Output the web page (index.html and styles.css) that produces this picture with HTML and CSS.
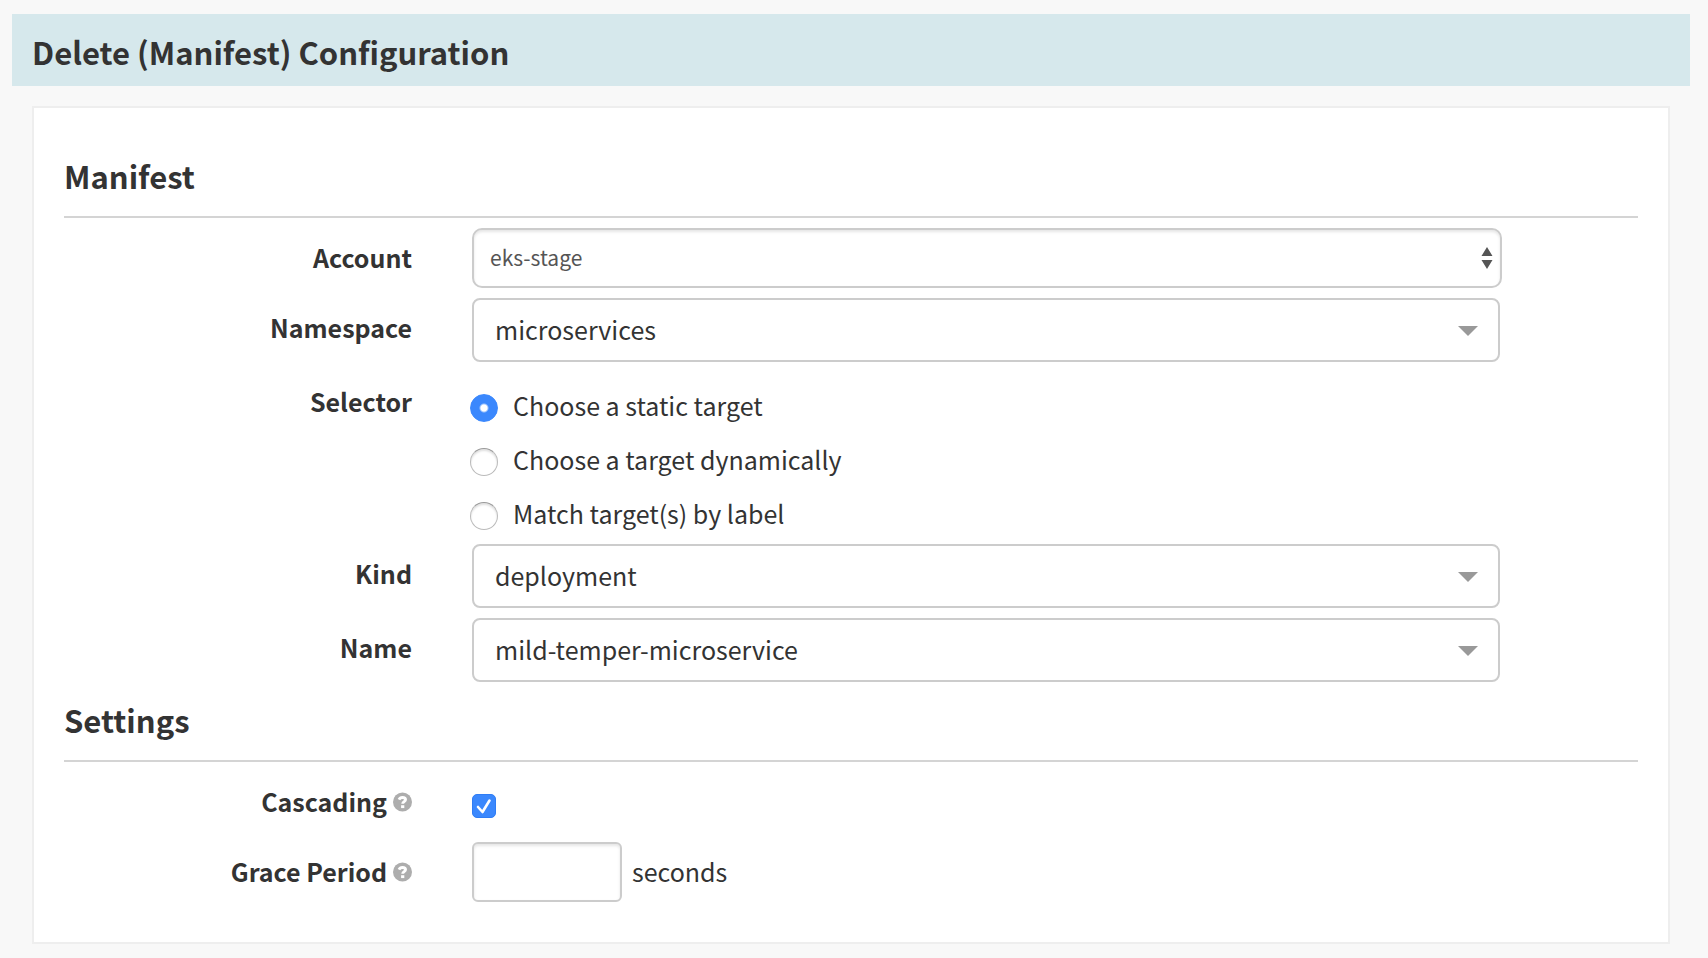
FILE: index.html
```html
<!DOCTYPE html>
<html lang="en">
<head>
<meta charset="utf-8">
<title>Delete (Manifest) Configuration</title>
<link rel="stylesheet" href="styles.css">
</head>
<body>
<svg class="sprite" aria-hidden="true">
  <symbol id="help" viewBox="0 0 20 20">
    <circle cx="10" cy="10" r="10" fill="#adadad"/>
    <path d="M6.300 7.500C7 6 8.200 5.300 9.900 5.300c2 0 3.300 .9 3.300 2.400 0 1.900-3 2.100-3 4.200" fill="none" stroke="#fff" stroke-width="3"/>
    <rect x="8.500" y="13.400" width="3.400" height="3" fill="#fff"/>
  </symbol>
  <symbol id="caret" viewBox="0 0 20 10"><path d="M0 0h20L10 10z" fill="#999"/></symbol>
  <symbol id="updown" viewBox="0 0 12 22"><path d="M6 0l5.500 9H.5zM.5 13h11L6 22z" fill="#555"/></symbol>
</svg>
<main class="page">
  <header class="banner"><h1 class="heading">Delete (Manifest) Configuration</h1></header>
  <form class="panel">
    <section class="section">
      <h2 class="heading section-title">Manifest</h2>
      <div class="row">
        <label class="label" for="account">Account</label>
        <div class="select native">
          <select id="account"><option>eks-stage</option></select>
          <svg class="updown" aria-hidden="true"><use href="#updown"/></svg>
        </div>
      </div>
      <div class="row">
        <label class="label" for="namespace">Namespace</label>
        <div class="select">
          <select id="namespace"><option>microservices</option></select>
          <svg class="caret" aria-hidden="true"><use href="#caret"/></svg>
        </div>
      </div>
      <div class="row" role="radiogroup" aria-labelledby="selector">
        <span class="label" id="selector">Selector</span>
        <div class="radios">
          <label class="radio"><input type="radio" name="selector" checked><span>Choose a static target</span></label>
          <label class="radio"><input type="radio" name="selector"><span>Choose a target dynamically</span></label>
          <label class="radio"><input type="radio" name="selector"><span>Match target(s) by label</span></label>
        </div>
      </div>
      <div class="row">
        <label class="label" for="kind">Kind</label>
        <div class="select">
          <select id="kind"><option>deployment</option></select>
          <svg class="caret" aria-hidden="true"><use href="#caret"/></svg>
        </div>
      </div>
      <div class="row">
        <label class="label" for="name">Name</label>
        <div class="select">
          <select id="name"><option>mild-temper-microservice</option></select>
          <svg class="caret" aria-hidden="true"><use href="#caret"/></svg>
        </div>
      </div>
    </section>
    <section class="section">
      <h2 class="heading section-title">Settings</h2>
      <div class="row">
        <label class="label" for="cascading">Cascading <svg class="help" aria-hidden="true"><use href="#help"/></svg></label>
        <div class="check">
          <input type="checkbox" id="cascading" checked>
          <svg class="tick" viewBox="0 0 24 24" aria-hidden="true"><path d="M6 13l4.500 5L17.500 6.500" fill="none" stroke="#fff" stroke-width="2.600" stroke-linecap="round" stroke-linejoin="round"/></svg>
        </div>
      </div>
      <div class="row">
        <label class="label" for="grace">Grace Period <svg class="help" aria-hidden="true"><use href="#help"/></svg></label>
        <div class="grace"><input type="text" id="grace"><span>seconds</span></div>
      </div>
    </section>
  </form>
</main>
</body>
</html>
```
FILE: styles.css
```css
* { box-sizing: border-box; }

body {
  margin: 0;
  background: #f8f8f8;
  color: #333;
  font-family: "Noto Sans CJK SC", "Noto Sans", sans-serif;
  font-size: 25px;
}

.sprite { position: absolute; width: 0; height: 0; }

.page { padding: 14px 18px 14px 12px; }

.banner { padding: 18px 20px 14px; background: #d6e8ec; }

.heading { margin: 0; font-size: 31px; font-weight: 700; line-height: 40px; }

.panel {
  margin: 20px 20px 0;
  padding: 48px 30px 40px;
  background: #fff;
  border: 2px solid #eee;
}

.section { display: flex; flex-direction: column; gap: 10px; }
.section + .section { margin-top: 18px; }

.section-title { padding-bottom: 20px; border-bottom: 2px solid #d4d4d4; }

.row {
  display: grid;
  grid-template-columns: 348fr 1030fr 76fr;
  column-gap: 60px;
  min-height: 60px;
}

.label {
  display: flex;
  justify-content: flex-end;
  align-items: center;
  gap: 6px;
  height: 58px;
  font-weight: 700;
}

.help { width: 19px; height: 20px; margin-top: 2px; }

.select { position: relative; margin-right: 2px; }
.select select {
  display: block;
  appearance: none;
  width: 100%;
  height: 64px;
  padding: 0 60px 2px 21px;
  border: 2px solid #ccc;
  border-radius: 8px;
  background: #fff;
  color: #333;
  font: inherit;
}
.select.native { margin-right: 0; }
.select.native select {
  height: 60px;
  padding-left: 16px;
  border-radius: 10px;
  box-shadow: inset 0 2px 3px rgba(0, 0, 0, 0.1);
  color: #555;
  font-size: 21px;
}

.caret, .updown { position: absolute; pointer-events: none; }
.caret { top: 28px; right: 22px; width: 20px; height: 10px; }
.updown { top: 19px; right: 9px; width: 12px; height: 22px; }

.radios { display: flex; flex-direction: column; gap: 18px; padding-top: 18px; }
.radio { display: flex; align-items: flex-start; gap: 15px; height: 36px; line-height: 30px; }
.radio input {
  appearance: none;
  width: 28px;
  height: 28px;
  margin: 4px 0 0 -2px;
  border: 1px solid #bbb;
  border-top-color: #999;
  border-radius: 50%;
  background: #fff;
  box-shadow: inset 0 2px 2px rgba(0, 0, 0, 0.12);
}
.radio input:checked {
  border-color: #3b88fd;
  background: radial-gradient(circle, #fff 3px, #3b88fd 5px);
  box-shadow: none;
}

.check { position: relative; padding-top: 22px; }
.check input {
  appearance: none;
  display: block;
  width: 24px;
  height: 24px;
  margin: 0;
  border: 1px solid #2f7df5;
  border-radius: 5px;
  background: #3b88fd;
}
.tick { position: absolute; top: 22px; left: 0; width: 24px; height: 24px; pointer-events: none; }
.check input:not(:checked) + .tick { display: none; }

.grace { display: flex; gap: 10px; line-height: 58px; }
.grace input {
  width: 150px;
  height: 60px;
  padding: 0 16px;
  border: 2px solid #ccc;
  border-radius: 6px;
  background: #fff;
  box-shadow: inset 0 2px 3px rgba(0, 0, 0, 0.1);
  color: #555;
  font: inherit;
}
```
